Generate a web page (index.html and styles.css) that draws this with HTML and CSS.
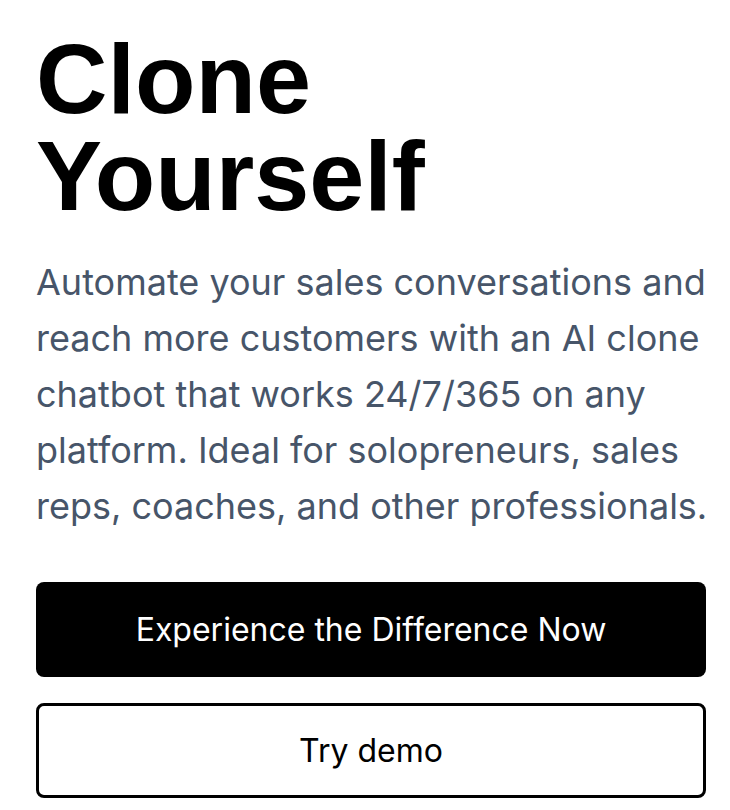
FILE: index.html
```html
<!DOCTYPE html>
<html lang="en">
<head>
<meta charset="utf-8">
<title>Clone Yourself</title>
<link rel="stylesheet" href="styles.css">
</head>
<body>
<main class="hero">
  <h1 class="hero-title"><span class="line">Clone</span><span class="line">Yourself</span></h1>
  <p class="hero-text">Automate your sales conversations and reach more customers with an AI clone chatbot that works 24/7/365 on any platform. Ideal for solopreneurs, sales reps, coaches, and other professionals.</p>
  <div class="hero-actions">
    <a class="btn btn-primary" href="#">Experience the Difference Now</a>
    <a class="btn btn-outline" href="#">Try demo</a>
  </div>
</main>
</body>
</html>
```
FILE: styles.css
```css
html, body {
  margin: 0;
  padding: 0;
  background: #ffffff;
}

.hero {
  padding: 30px 24px 0 36px;
  font-family: Inter, "Noto Sans", sans-serif;
}

.hero-title {
  margin: 0;
  font-family: "Liberation Sans", Arial, sans-serif;
  font-weight: 700;
  font-size: 99px;
  line-height: 97px;
  color: #000000;
}

.hero-title .line {
  display: block;
}

.hero-text {
  margin: 30px -10px 0 0;
  font-size: 36px;
  line-height: 56px;
  color: #475569;
}

.hero-actions {
  display: flex;
  flex-direction: column;
  gap: 26px;
  margin-top: 48px;
}

.btn {
  display: block;
  box-sizing: border-box;
  text-align: center;
  text-decoration: none;
  font-size: 32px;
  line-height: 37px;
  border-radius: 8px;
  height: 95px;
  padding: 29px 0;
}

.btn-primary {
  background: #000000;
  color: #ffffff;
}

.btn-outline {
  background: #ffffff;
  color: #000000;
  border: 3px solid #000000;
  padding: 26px 0;
}
```
